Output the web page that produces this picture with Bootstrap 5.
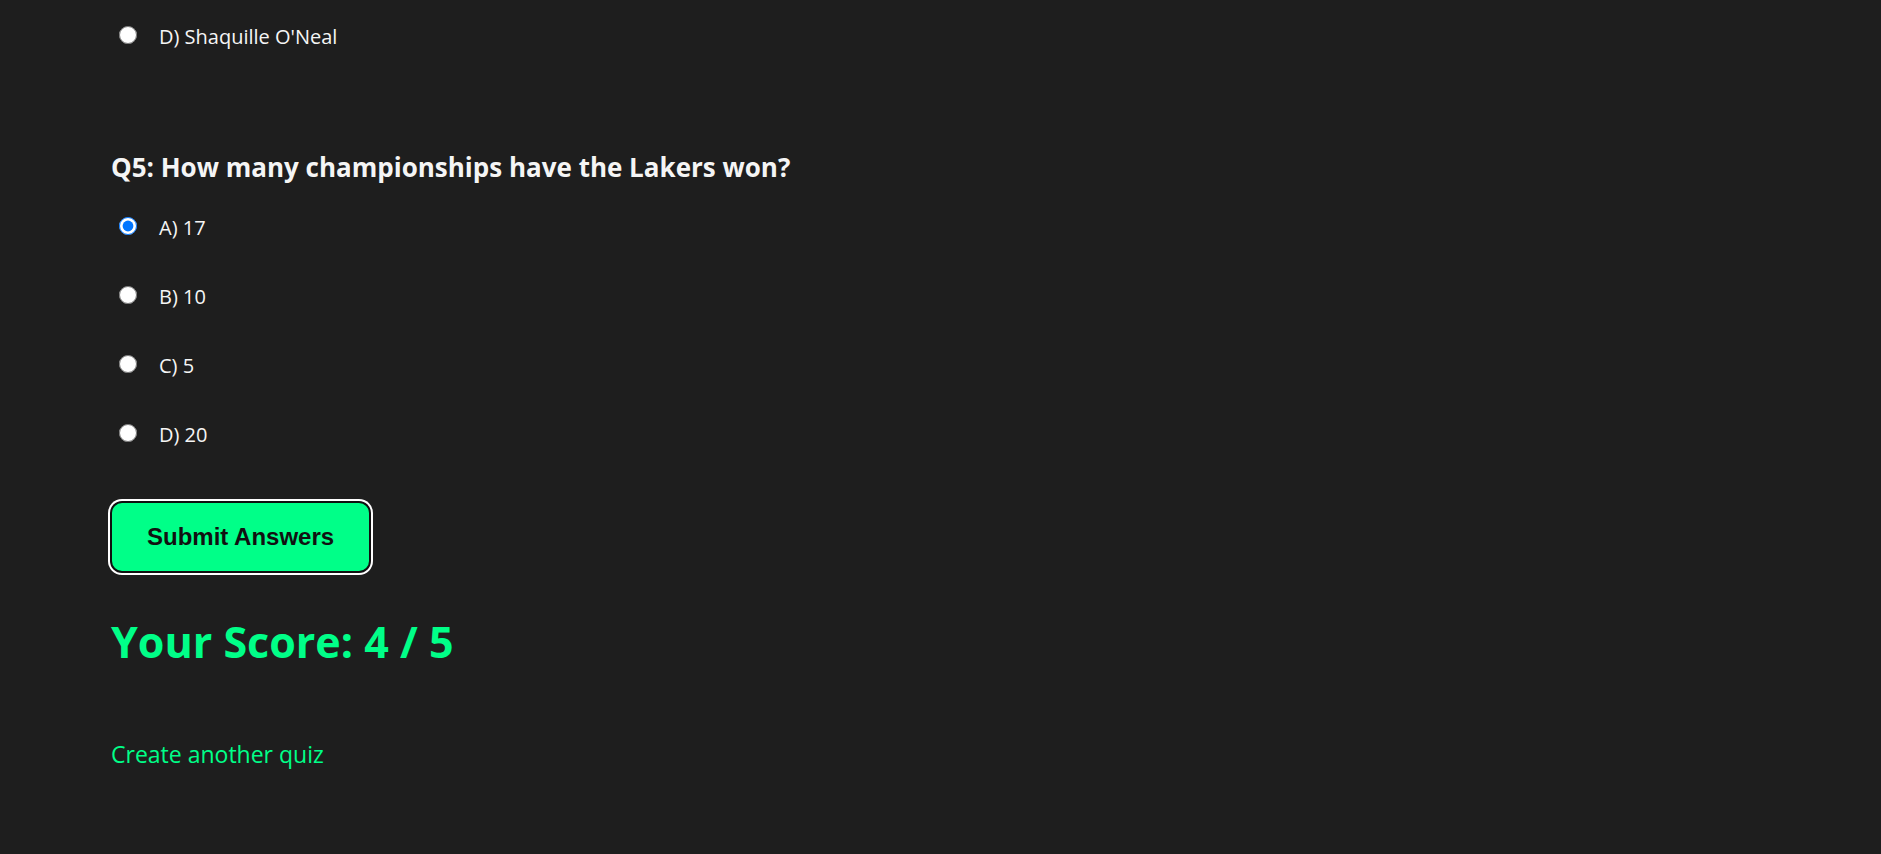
<!DOCTYPE html>
<html lang="en">
<head>
<meta charset="utf-8">
<meta name="viewport" content="width=device-width, initial-scale=1">
<title>Quiz</title>
<link href="https://cdn.jsdelivr.net/npm/bootstrap@5.3.0/dist/css/bootstrap.min.css" rel="stylesheet">
<style>
body { background: #1e1e1e; color: #f5f5f5; font-family: "Open Sans", "Noto Sans", sans-serif; }
.quiz { padding: 2px 111px 0; }
.question { font-size: 26px; line-height: 36px; font-weight: 700; }
.question-block { padding-top: 78px; }
.option { height: 69px; padding-left: 8px; gap: 22px; }
.option input { width: 18px; height: 18px; margin: 0 0 4px; flex: none; accent-color: #0075ff; }
.option label { font-size: 20px; line-height: 28px; }
.submit-btn, .submit-btn:hover { background: #00ff88; color: #111; font: 700 24px/28px "Liberation Sans", Arial, sans-serif; padding: 20px 35px; border: 0; border-radius: 10px; margin: 34px 0 0 1px; box-shadow: 0 0 0 2px #101010, 0 0 0 4px #fff; }
.score { font-size: 43px; line-height: 60px; font-weight: 700; color: #00ff88; margin: 41px 0 64px; }
.again { color: #00ff88; font-size: 23px; line-height: 36px; }
</style>
</head>
<body>
<main class="quiz">
<form onsubmit="return false">
<div class="option d-flex align-items-center"><input type="radio" name="q4" id="q4d"><label for="q4d">D) Shaquille O'Neal</label></div>
<fieldset class="question-block">
<legend class="question mb-2">Q5: How many championships have the Lakers won?</legend>
<div class="option d-flex align-items-center"><input type="radio" name="q5" id="q5a" checked><label for="q5a">A) 17</label></div>
<div class="option d-flex align-items-center"><input type="radio" name="q5" id="q5b"><label for="q5b">B) 10</label></div>
<div class="option d-flex align-items-center"><input type="radio" name="q5" id="q5c"><label for="q5c">C) 5</label></div>
<div class="option d-flex align-items-center"><input type="radio" name="q5" id="q5d"><label for="q5d">D) 20</label></div>
</fieldset>
<button type="submit" class="btn submit-btn">Submit Answers</button>
</form>
<h1 class="score">Your Score: 4 / 5</h1>
<a href="#" class="again text-decoration-none">Create another quiz</a>
</main>
<script src="https://cdn.jsdelivr.net/npm/bootstrap@5.3.0/dist/js/bootstrap.bundle.min.js"></script>
</body>
</html>
